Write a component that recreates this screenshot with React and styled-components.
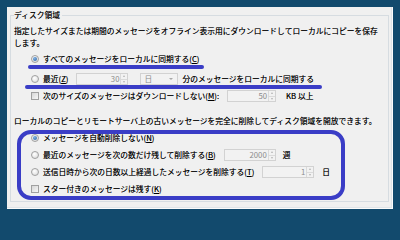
import React from "react";
import styled, { createGlobalStyle } from "styled-components";

const GlobalStyle = createGlobalStyle`
  html, body {
    margin: 0;
    padding: 0;
    background: #124a6d;
  }
  body {
    font-family: "Noto Sans CJK JP", "Noto Sans", sans-serif;
    font-size: 7.75px;
    color: #000;
    text-shadow: 0 0 0.4px rgba(0, 0, 0, 0.6);
  }
`;

const Window = styled.div`
  margin: 7px 0 0 7px;
  width: 386px;
  height: 202px;
  box-sizing: border-box;
  padding: 2px 4px 7px 3px;
  background: #f0f0f0;
  box-shadow: inset -1px -1px 0 #fbfbfb, inset -2px -2px 0 #dfe4e8;
  display: flex;
  flex-direction: column;
`;

const GroupBox = styled.fieldset`
  flex: 1;
  margin: 0;
  padding: 0 0 0 3px;
  border: 1px solid #d6dce1;
  min-width: 0;
`;

const Legend = styled.legend`
  padding: 0 2px 0 0;
  line-height: 12px;
`;

const Text = styled.div`
  line-height: 12px;
  margin-top: ${(p) => p.$mt || 0}px;
  white-space: nowrap;
`;

const Row = styled.div`
  position: relative;
  display: flex;
  align-items: center;
  height: 12px;
  margin-top: ${(p) => p.$mt || 0}px;
  padding-left: 17px;
  white-space: nowrap;
`;

const Mark = styled.span`
  position: absolute;
  left: ${(p) => p.$left}px;
  width: ${(p) => p.$width}px;
  top: ${(p) => p.$top}px;
  height: 4px;
  border-radius: 2px;
  background: #3a3dc6;
`;

const Radio = styled.span`
  width: 8px;
  height: 8px;
  box-sizing: border-box;
  border-radius: 50%;
  border: 1px solid #a0a0a0;
  background: radial-gradient(circle at 40% 35%, #ffffff, #d8d8d8);
  margin-left: -0.5px;
  margin-right: 4.5px;
  display: flex;
  align-items: center;
  justify-content: center;
  flex-shrink: 0;
  &::after {
    content: "";
    display: ${(p) => (p.$checked ? "block" : "none")};
    width: 4px;
    height: 4px;
    border-radius: 50%;
    background: radial-gradient(circle at 40% 35%, #7fb2e5, #2a5f9e);
  }
`;

const Check = styled.span`
  width: 8px;
  height: 8px;
  box-sizing: border-box;
  border: 1px solid #a0a0a0;
  background: linear-gradient(135deg, #d6d6d6, #f7f7f7);
  margin-right: 4px;
  flex-shrink: 0;
`;

const Label = styled.span`
  line-height: 12px;
  margin-right: ${(p) => p.$mr || 0}px;
`;

const SpinBox = styled.div`
  display: flex;
  align-items: stretch;
  width: ${(p) => p.$width}px;
  height: 12px;
  box-sizing: border-box;
  border: 1px solid #d2d2d2;
  background: #f2f2f2;
  margin-right: ${(p) => p.$mr || 0}px;
  text-shadow: none;
`;

const SpinValue = styled.span`
  flex: 1;
  text-align: right;
  line-height: 10px;
  color: #8c8c8c;
  padding-right: 1px;
`;

const SpinButtons = styled.div`
  width: 6px;
  display: flex;
  flex-direction: column;
  border-left: 1px solid #dadada;
`;

const SpinArrow = styled.span`
  flex: 1;
  display: flex;
  align-items: center;
  justify-content: center;
  & + & {
    border-top: 1px solid #dadada;
  }
  &::after {
    content: "";
    border-left: 1.5px solid transparent;
    border-right: 1.5px solid transparent;
    ${(p) =>
      p.$up
        ? "border-bottom: 2px solid #b4b4b4;"
        : "border-top: 2px solid #b4b4b4;"}
  }
`;

const Select = styled.div`
  display: flex;
  align-items: center;
  width: 38px;
  height: 12px;
  box-sizing: border-box;
  border: 1px solid #d2d2d2;
  background: #f2f2f2;
  padding: 0 4px 0 3px;
  margin-left: 12px;
  margin-right: 4px;
  color: #8c8c8c;
  text-shadow: none;
  line-height: 10px;
  &::after {
    content: "";
    margin-left: auto;
    border-left: 2px solid transparent;
    border-right: 2px solid transparent;
    border-top: 2px solid #a8a8a8;
  }
`;

const OptionList = styled.div`
  position: relative;
  display: flex;
  flex-direction: column;
  gap: 5px;
  margin-top: 5px;
  &::before {
    content: "";
    position: absolute;
    left: 3px;
    width: 328px;
    top: -2px;
    bottom: -5px;
    box-sizing: border-box;
    border: 4px solid #3a3dc6;
    border-radius: 14px;
    pointer-events: none;
  }
  & > ${Row} {
    margin-top: 0;
  }
`;

const Spin = ({ value, width, mr }) => (
  <SpinBox $width={width} $mr={mr}>
    <SpinValue>{value}</SpinValue>
    <SpinButtons>
      <SpinArrow $up />
      <SpinArrow />
    </SpinButtons>
  </SpinBox>
);

export default function App() {
  return (
    <>
      <GlobalStyle />
      <Window>
        <GroupBox>
          <Legend>ディスク領域</Legend>
          <Text $mt={4}>
            指定したサイズまたは期間のメッセージをオフライン表示用にダウンロードしてローカルにコピーを保存
            <br />
            します。
          </Text>
          <Row $mt={4}>
            <Radio $checked />
            <Label>
              すべてのメッセージをローカルに同期する(<u>C</u>)
            </Label>
            <Mark $left={14} $width={176} $top={12} />
          </Row>
          <Row $mt={8}>
            <Radio />
            <Label $mr={8}>
              最近(<u>Z</u>)
            </Label>
            <Spin value="30" width={52} />
            <Select>日</Select>
            <Label>分のメッセージをローカルに同期する</Label>
            <Mark $left={11} $width={297} $top={12} />
          </Row>
          <Row $mt={5}>
            <Check />
            <Label $mr={8}>
              次のサイズのメッセージはダウンロードしない(<u>M</u>):
            </Label>
            <Spin value="50" width={49} mr={10} />
            <Label>KB 以上</Label>
          </Row>
          <Text $mt={13}>
            ローカルのコピーとリモートサーバ上の古いメッセージを完全に削除してディスク領域を開放できます。
          </Text>
          <OptionList>
            <Row>
              <Radio $checked />
              <Label>
                メッセージを自動削除しない(<u>N</u>)
              </Label>
            </Row>
            <Row>
              <Radio />
              <Label $mr={8}>
                最近のメッセージを次の数だけ残して削除する(<u>B</u>)
              </Label>
              <Spin value="2000" width={52} mr={7} />
              <Label>週</Label>
            </Row>
            <Row>
              <Radio />
              <Label $mr={8}>
                送信日時から次の日数以上経過したメッセージを削除する(<u>T</u>)
              </Label>
              <Spin value="1" width={52} mr={8} />
              <Label>日</Label>
            </Row>
            <Row>
              <Check />
              <Label>
                スター付きのメッセージは残す(<u>K</u>)
              </Label>
            </Row>
          </OptionList>
        </GroupBox>
      </Window>
    </>
  );
}
